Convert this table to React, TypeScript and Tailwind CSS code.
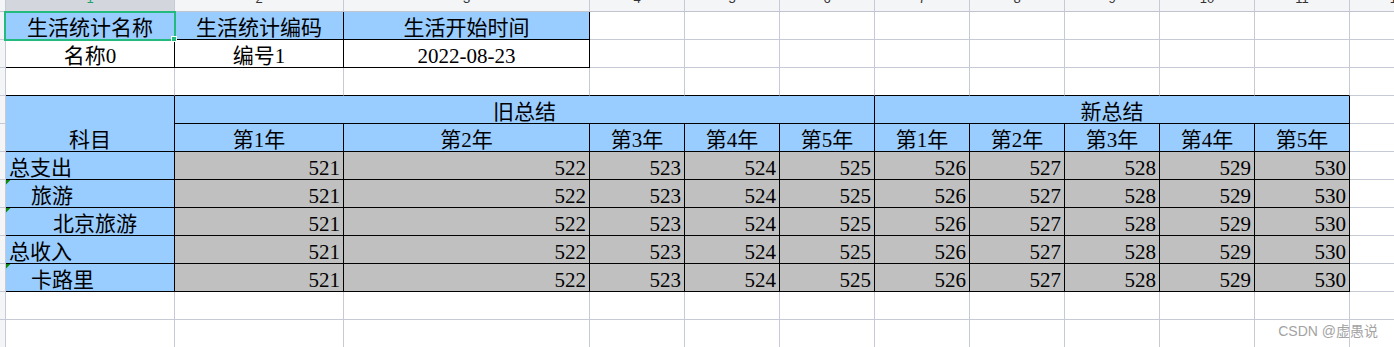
import React from "react";

type Bg = "white" | "blue" | "gray";
type Line = "g" | "k";

interface CellProps {
  bg?: Bg;
  r?: Line;
  b?: Line;
  align?: "left" | "center" | "right";
  indent?: number;
  span?: string;
  tri?: boolean;
  children?: React.ReactNode;
}

function Cell({ bg = "white", r = "g", b = "g", align = "left", indent = 0, span = "", tri = false, children }: CellProps) {
  const bgc = bg === "blue" ? "bg-[#99ccff]" : bg === "gray" ? "bg-[#c0c0c0]" : "bg-white";
  const rc = r === "k" ? "border-r-black" : "border-r-[#c6c9d6]";
  const bc = b === "k" ? "border-b-black" : "border-b-[#c6c9d6]";
  let al = "justify-start pl-[3px]";
  if (align === "center") al = "justify-center";
  if (align === "right") al = "justify-end pr-[3px]";
  if (align === "left" && indent === 1) al = "justify-start pl-[25px]";
  if (align === "left" && indent === 2) al = "justify-start pl-[47px]";
  return (
    <div className={`relative flex items-end overflow-hidden whitespace-nowrap border-r border-b ${bgc} ${rc} ${bc} ${al} ${span}`}>
      {tri && (
        <svg className="absolute left-0 top-0" width="5" height="5" viewBox="0 0 5 5">
          <polygon points="0,0 4.5,0 0,4.5" fill="#128a12" />
        </svg>
      )}
      <span className="text-[21px] leading-[21px] text-black">{children}</span>
    </div>
  );
}

function Strip() {
  return <div className="border-r border-b border-r-[#c6c9d6] border-b-[#c6c9d6] bg-[#f4f5f7]" />;
}

const colLabels = ["1", "2", "3", "4", "5", "6", "7", "8", "9", "10", "11", "12"];

const dataRows = [
  { label: "总支出", indent: 0, tri: false },
  { label: "旅游", indent: 1, tri: true },
  { label: "北京旅游", indent: 2, tri: true },
  { label: "总收入", indent: 0, tri: false },
  { label: "卡路里", indent: 1, tri: true },
];

const years = ["第1年", "第2年", "第3年", "第4年", "第5年"];

export default function App() {
  const cells: React.ReactNode[] = [];
  let k = 0;
  const key = () => `c${k++}`;

  // header row
  cells.push(<div key={key()} className="border-r border-b border-r-[#c6c9d6] border-b-[#c0c4cf] bg-[#f4f5f7]" />);
  colLabels.forEach((l, i) => {
    cells.push(
      <div
        key={key()}
        className={`relative overflow-hidden border-r border-b border-r-[#c6c9d6] border-b-[#c0c4cf] ${i === 0 ? "bg-[#d3d6dc]" : "bg-[#f4f5f7]"}`}
      >
        <span
          className={`absolute left-0 right-0 top-[-8px] text-center font-['Liberation_Sans',sans-serif] text-[13px] leading-[13px] ${i === 0 ? "text-[#1fa36b]" : "text-[#333333]"}`}
        >
          {l}
        </span>
      </div>
    );
  });

  // row 1
  cells.push(<Strip key={key()} />);
  ["生活统计名称", "生活统计编码", "生活开始时间"].forEach((t) =>
    cells.push(
      <Cell key={key()} bg="blue" r="k" b="k" align="center">
        {t}
      </Cell>
    )
  );
  for (let i = 0; i < 9; i++) cells.push(<Cell key={key()} />);

  // row 2
  cells.push(<Strip key={key()} />);
  ["名称0", "编号1", "2022-08-23"].forEach((t) =>
    cells.push(
      <Cell key={key()} r="k" b="k" align="center">
        {t}
      </Cell>
    )
  );
  for (let i = 0; i < 9; i++) cells.push(<Cell key={key()} />);

  // row 3
  cells.push(<Strip key={key()} />);
  for (let i = 0; i < 11; i++) cells.push(<Cell key={key()} b="k" />);
  cells.push(<Cell key={key()} />);

  // row 4
  cells.push(<Strip key={key()} />);
  cells.push(
    <Cell key={key()} bg="blue" r="k" b="k" align="center" span="row-span-2">
      科目
    </Cell>
  );
  cells.push(
    <Cell key={key()} bg="blue" r="k" b="k" align="center" span="col-span-5">
      旧总结
    </Cell>
  );
  cells.push(
    <Cell key={key()} bg="blue" r="k" b="k" align="center" span="col-span-5">
      新总结
    </Cell>
  );
  cells.push(<Cell key={key()} />);

  // row 5
  cells.push(<Strip key={key()} />);
  [...years, ...years].forEach((y) =>
    cells.push(
      <Cell key={key()} bg="blue" r="k" b="k" align="center">
        {y}
      </Cell>
    )
  );
  cells.push(<Cell key={key()} />);

  // data rows
  dataRows.forEach((row) => {
    cells.push(<Strip key={key()} />);
    cells.push(
      <Cell key={key()} bg="blue" r="k" b="k" indent={row.indent} tri={row.tri}>
        {row.label}
      </Cell>
    );
    for (let i = 0; i < 10; i++)
      cells.push(
        <Cell key={key()} bg="gray" r="k" b="k" align="right">
          {521 + i}
        </Cell>
      );
    cells.push(<Cell key={key()} />);
  });

  // empty rows
  for (let r = 0; r < 2; r++) {
    cells.push(<Strip key={key()} />);
    for (let i = 0; i < 12; i++) cells.push(<Cell key={key()} />);
  }

  return (
    <div className="relative h-[347px] w-[1394px] overflow-hidden bg-white font-['Liberation_Serif','Noto_Sans_CJK_SC',serif]">
      <div className="grid grid-cols-[6px_169px_169px_246px_95px_95px_95px_95px_95px_95px_95px_95px_95px] grid-rows-[12px_repeat(12,28px)]">
        {cells}
      </div>
      {/* selection */}
      <div className="pointer-events-none absolute left-[4px] top-[11px] h-[30px] w-[172px] border-2 border-[#22bb7d]" />
      <div className="pointer-events-none absolute left-[171px] top-[36px] h-[6px] w-[6px] border border-white bg-[#22bb7d]" />
      {/* watermark */}
      <div className="pointer-events-none absolute right-[16px] top-[324px] font-['Liberation_Sans','Noto_Sans_CJK_SC',sans-serif] text-[14px] leading-[14px] text-[#a3a3a3]">
        CSDN @虚愚说
      </div>
    </div>
  );
}
